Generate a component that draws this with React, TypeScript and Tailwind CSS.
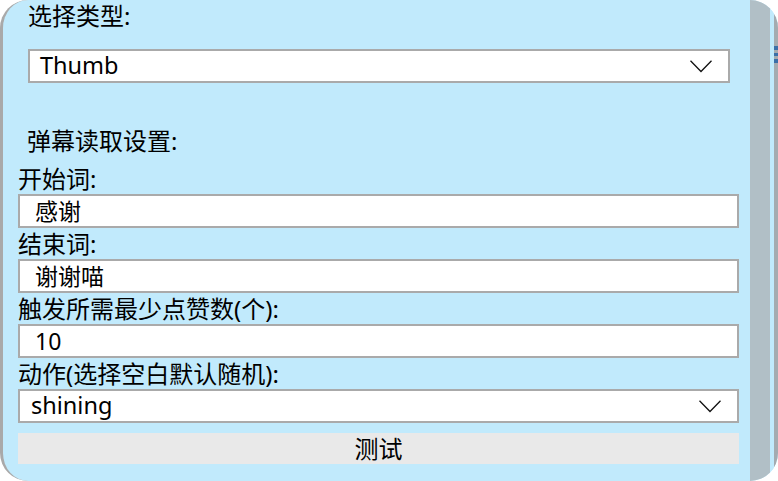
import React from "react";

const font = { fontFamily: '"Noto Sans", "Noto Sans CJK SC", sans-serif' };

function Chevron() {
  return (
    <svg width="22" height="13" viewBox="0 0 22 13" className="shrink-0">
      <polyline points="0.5,0.8 11,11.5 21.5,0.8" fill="none" stroke="#111" strokeWidth="1.3" />
    </svg>
  );
}

function Label({ children }: { children: React.ReactNode }) {
  return <div className="h-[31px] leading-[31px] text-[24px] text-black whitespace-nowrap">{children}</div>;
}

function TextBox({ value }: { value: string }) {
  return (
    <div className="h-[34px] border-2 border-[#aaaaaa] bg-white flex items-center pl-[15px] text-[23px] text-black leading-none">
      {value}
    </div>
  );
}

function Combo({ value, pl }: { value: string; pl: string }) {
  return (
    <div className={`h-[34px] border-2 border-[#aaaaaa] bg-white flex items-center justify-between pr-[16px] text-[23.5px] text-black leading-none ${pl}`}>
      <span>{value}</span>
      <Chevron />
    </div>
  );
}

export default function App() {
  return (
    <div className="w-[778px] h-[481px] bg-white overflow-hidden" style={font}>
      <div className="w-[778px] h-[481px] rounded-[28px] bg-[#c1eafc] border-l-[3px] border-[#a9a9a9] overflow-hidden flex">
        <div className="w-[747px] flex flex-col">
          <div className="ml-[25px] w-[702px]">
            <Label>选择类型:</Label>
            <div className="mt-[18px]">
              <Combo value="Thumb" pl="pl-[10px]" />
            </div>
          </div>
          <div className="ml-[24px] mt-[42px]">
            <Label>弹幕读取设置:</Label>
          </div>
          <div className="ml-[15px] w-[721px] mt-[7px] flex flex-col">
            <Label>开始词:</Label>
            <TextBox value="感谢" />
            <Label>结束词:</Label>
            <TextBox value="谢谢喵" />
            <Label>触发所需最少点赞数(个):</Label>
            <TextBox value="10" />
            <Label>动作(选择空白默认随机):</Label>
            <Combo value="shining" pl="pl-[11px]" />
            <div className="mt-[10px] h-[31px] bg-[#e9e9e9] flex items-center justify-center text-[24px] text-black leading-none">
              测试
            </div>
          </div>
        </div>
        <div className="w-[20px] bg-[#b1bfc6]" />
        <div className="w-[4px] bg-[#c1eafc]" />
        <div className="w-[4px] bg-[#a4abb0] flex flex-col pt-[46px] gap-[3px]">
          <div className="h-[4px] bg-[#3b6fa8]" />
          <div className="h-[3px] bg-[#3b6fa8]" />
          <div className="h-[4px] bg-[#3b6fa8]" />
        </div>
      </div>
    </div>
  );
}
